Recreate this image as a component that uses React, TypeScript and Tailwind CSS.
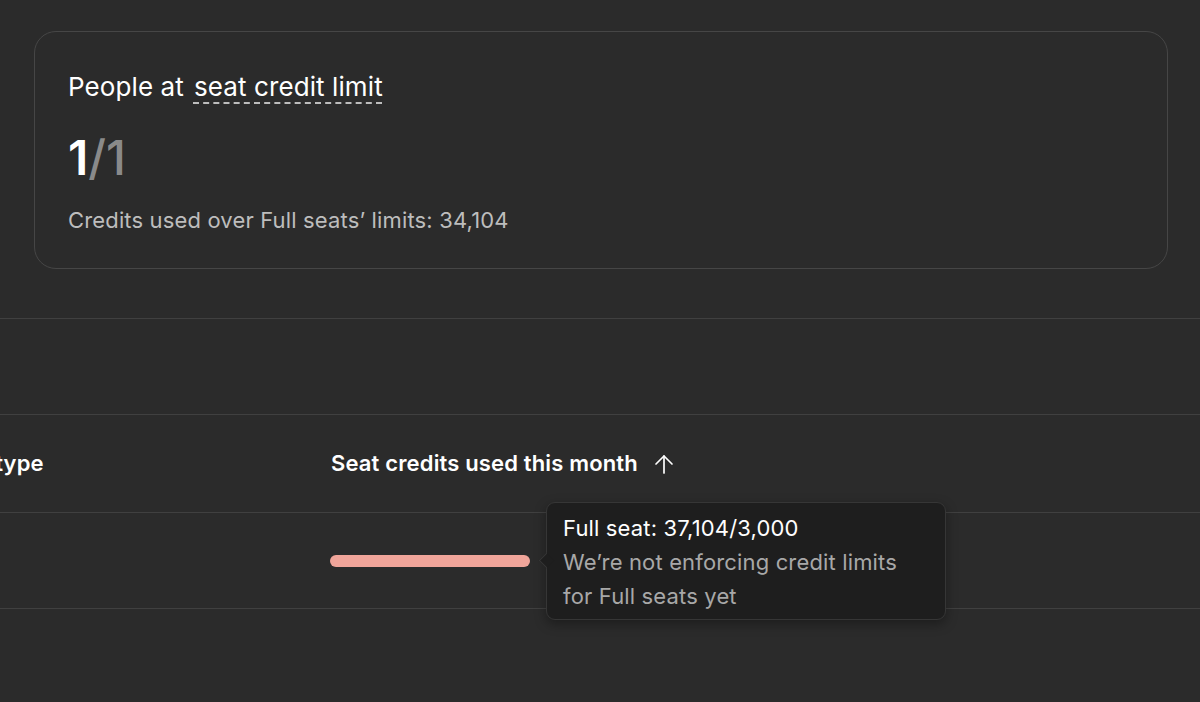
import React from "react";

export default function App() {
  return (
    <div
      className="w-[1200px] h-[702px] bg-[#2b2b2b] overflow-hidden relative text-white"
      style={{ fontFamily: "Inter, 'Noto Sans', sans-serif" }}
    >
      <div className="pt-[31px] pl-[34px] pr-[32px]">
        <div className="h-[238px] rounded-[22px] border border-[#464646] pl-[33px] pt-[39px]">
          <div className="flex items-center text-[26px] leading-[32px] text-white tracking-[0.1px]">
            <span>People at</span>
            <span className="ml-[10px] underline decoration-dashed decoration-[#bdbdbd] decoration-[1.5px] underline-offset-[6px]">
              seat credit limit
            </span>
          </div>
          <div className="mt-[28px] text-[48px] leading-[54px] font-semibold">
            <span className="text-white">1</span>
            <span className="text-[#8a8a8a] font-medium">/1</span>
          </div>
          <div className="mt-[20px] text-[22px] leading-[30px] text-[#bdbdbd] tracking-[0.15px]">
            Credits used over Full seats’ limits: 34,104
          </div>
        </div>
      </div>

      <div className="mt-[49px] border-t border-[#404040] h-[96px]" />
      <div className="border-t border-[#404040] h-[98px] flex items-center overflow-hidden">
        <div className="w-[331px] shrink-0 overflow-hidden">
          <div className="-ml-[59px] text-[22px] font-semibold whitespace-nowrap tracking-[0.15px]">Seat type</div>
        </div>
        <div className="flex items-center text-[22px] font-semibold whitespace-nowrap tracking-[0.15px]">
          <span>Seat credits used this month</span>
          <svg className="ml-[15px]" width="22" height="22" viewBox="0 0 22 22" fill="none" stroke="white" strokeWidth="1.7" strokeLinecap="round" strokeLinejoin="round">
            <path d="M3 11 L11 3 L19 11" />
            <path d="M11 3 V20" />
          </svg>
        </div>
      </div>
      <div className="border-t border-b border-[#404040] h-[97px] flex items-center">
        <div className="w-[330px] shrink-0" />
        <div className="w-[200px] h-[12px] rounded-full bg-[#f0a59a]" />
      </div>

      <div className="absolute left-[546px] top-[502px] w-[400px] h-[118px] rounded-[9px] bg-[#1e1e1e] border border-[#363636] shadow-[0_4px_12px_rgba(0,0,0,0.35)] pl-[16px] pt-[8px]">
        <div className="absolute -left-[6px] top-[52px] w-[11px] h-[11px] rotate-45 bg-[#1e1e1e] border-l border-b border-[#363636]" />
        <div className="relative text-[22px] leading-[34px] text-white tracking-[0.15px]">Full seat: 37,104/3,000</div>
        <div className="relative text-[22px] leading-[34px] text-[#a8a8a8] tracking-[0.15px]">
          We’re not enforcing credit limits
          <br />
          for Full seats yet
        </div>
      </div>
    </div>
  );
}
